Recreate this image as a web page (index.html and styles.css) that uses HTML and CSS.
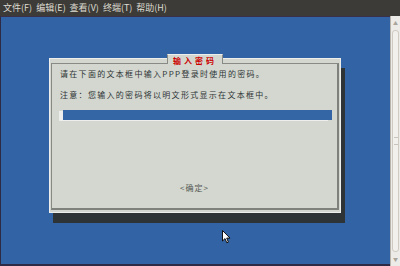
FILE: index.html
```html
<!DOCTYPE html>
<html>
<head>
<meta charset="utf-8">
<link rel="stylesheet" href="styles.css">
</head>
<body>
<div class="window">
  <div class="menubar">
    <span class="menu">文件(F)</span>
    <span class="menu">编辑(E)</span>
    <span class="menu">查看(V)</span>
    <span class="menu">终端(T)</span>
    <span class="menu">帮助(H)</span>
  </div>
  <div class="main">
    <div class="terminal">
      <div class="dialog">
        <div class="tab">输入密码</div>
        <div class="frame">
          <p class="line">请在下面的文本框中输入PPP登录时使用的密码。</p>
          <p class="line second">注意：您输入的密码将以明文形式显示在文本框中。</p>
          <div class="field"></div>
          <div class="button">&lt;确定&gt;</div>
        </div>
      </div>
      <svg class="cursor" width="9" height="14" viewBox="0 0 9 14">
        <path d="M0.5 0.5 L0.5 11 L3 8.6 L4.8 12.8 L6.4 12.1 L4.7 8.1 L8 8.1 Z" fill="#fff" stroke="#111" stroke-width="1"/>
      </svg>
    </div>
    <div class="scrollbar">
      <div class="arrow up">▲</div>
      <div class="thumb"><span class="grip"></span></div>
      <div class="arrow down">▼</div>
    </div>
  </div>
</div>
</body>
</html>
```
FILE: styles.css
```css
html, body {
  margin: 0;
  padding: 0;
}
body {
  width: 400px;
  height: 266px;
  overflow: hidden;
  font-family: "Noto Sans CJK SC", "Noto Sans", sans-serif;
}
.window {
  width: 400px;
  height: 266px;
  display: flex;
  flex-direction: column;
}
.menubar {
  height: 16px;
  background: #3c3b37;
  display: flex;
  align-items: center;
  gap: 5px;
  padding-left: 3px;
  box-sizing: border-box;
}
.menu {
  color: #dfdbd2;
  font-size: 9px;
  line-height: 16px;
  width: 28.3px;
  white-space: nowrap;
}
.main {
  flex: 1;
  display: flex;
  min-height: 0;
}
.terminal {
  flex: 1;
  position: relative;
  background: #3163a5;
  border-top: 1px solid #3b3049;
  border-left: 1px solid #2c2a45;
  border-bottom: 2px solid #2c2a45;
  box-sizing: border-box;
  padding-left: 48px;
  padding-top: 41px;
}
.dialog {
  position: relative;
  width: 292px;
  height: 155px;
  box-sizing: border-box;
  background: #d3d7cf;
  border: 1px solid #eeeeec;
  padding: 4px 1px 2px 1px;
  box-shadow: 4px 10px 0 #2e3436;
}
.tab {
  position: absolute;
  left: 117px;
  top: -5px;
  width: 56px;
  height: 10px;
  box-sizing: border-box;
  background: #d3d7cf;
  border: 1px solid #888a85;
  border-bottom: none;
  border-top-color: #eeeeec;
  color: #cc0000;
  font-size: 8px;
  font-weight: bold;
  letter-spacing: 3px;
  line-height: 10px;
  padding-top: 1px;
  text-align: center;
  z-index: 1;
}
.frame {
  height: 100%;
  box-sizing: border-box;
  border: 1px solid #888a85;
  border-right: 2px solid #7f817c;
  border-bottom: 2px solid #7f817c;
  padding: 4px 0 0 8px;
  display: flex;
  flex-direction: column;
}
.line {
  margin: 0;
  font-size: 8px;
  letter-spacing: 1.3px;
  line-height: 11px;
  color: #2e3436;
  white-space: nowrap;
}
.second {
  margin-top: 10px;
}
.field {
  margin-top: 10px;
  margin-left: 3px;
  width: 269px;
  height: 10px;
  background: #3465a4;
  box-shadow: -4px 1px 0 #eeeeec;
}
.button {
  margin-top: 62px;
  margin-left: -8px;
  text-align: center;
  font-size: 8px;
  line-height: 11px;
  letter-spacing: 1px;
  color: #555753;
}
.cursor {
  position: absolute;
  left: 221px;
  top: 213px;
}
.scrollbar {
  width: 10px;
  background: #edebe7;
  border-left: 1px solid #b9b4ab;
  box-sizing: border-box;
  display: flex;
  flex-direction: column;
}
.arrow {
  height: 14px;
  font-size: 5px;
  color: #a8a49c;
  text-align: center;
  line-height: 14px;
}
.thumb {
  flex: 1;
  margin: 0 1px;
  border: 1px solid #cfcac2;
  border-radius: 3px;
  background: #f2f0ec;
  display: flex;
  align-items: center;
  justify-content: center;
}
.grip {
  width: 4px;
  height: 6px;
  border-top: 1px solid #c9c4bb;
  border-bottom: 1px solid #c9c4bb;
}
```
